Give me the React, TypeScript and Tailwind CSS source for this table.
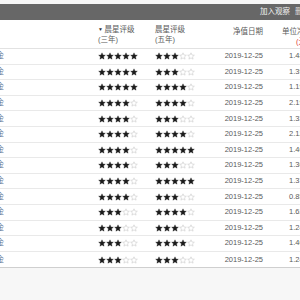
import React from "react";

type Fund = {
  name: string;
  r3: number;
  r5: number;
  date: string;
  nav: string;
};

const funds: Fund[] = [
  { name: "混合基金", r3: 5, r5: 3, date: "2019-12-25", nav: "1.485" },
  { name: "混合基金", r3: 5, r5: 3, date: "2019-12-25", nav: "1.391" },
  { name: "混合基金", r3: 5, r5: 4, date: "2019-12-25", nav: "1.195" },
  { name: "混合基金", r3: 4, r5: 4, date: "2019-12-25", nav: "2.195" },
  { name: "混合基金", r3: 4, r5: 3, date: "2019-12-25", nav: "1.332" },
  { name: "混合基金", r3: 4, r5: 4, date: "2019-12-25", nav: "2.124" },
  { name: "混合基金", r3: 4, r5: 5, date: "2019-12-25", nav: "1.403" },
  { name: "混合基金", r3: 4, r5: 3, date: "2019-12-25", nav: "1.360" },
  { name: "混合基金", r3: 4, r5: 5, date: "2019-12-25", nav: "1.371" },
  { name: "混合基金", r3: 4, r5: 3, date: "2019-12-25", nav: "0.856" },
  { name: "混合基金", r3: 3, r5: 4, date: "2019-12-25", nav: "1.623" },
  { name: "混合基金", r3: 3, r5: 3, date: "2019-12-25", nav: "1.241" },
  { name: "混合基金", r3: 3, r5: 4, date: "2019-12-25", nav: "1.406" },
  { name: "混合基金", r3: 3, r5: 3, date: "2019-12-25", nav: "1.243" },
];

function Star({ filled }: { filled: boolean }) {
  return (
    <svg width="8" height="8" viewBox="0 0 24 24" className="shrink-0">
      <path
        d="M12 2.5l2.9 6.6 7.1.6-5.4 4.7 1.6 7-6.2-3.7-6.2 3.7 1.6-7L2 9.7l7.1-.6z"
        fill={filled ? "#1c1c1c" : "none"}
        stroke={filled ? "#1c1c1c" : "#c4c4c4"}
        strokeWidth={filled ? 1 : 1.6}
        strokeLinejoin="round"
      />
    </svg>
  );
}

function Stars({ n }: { n: number }) {
  return (
    <div className="flex items-center">
      {[0, 1, 2, 3, 4].map((i) => (
        <Star key={i} filled={i < n} />
      ))}
    </div>
  );
}

const cols = "grid grid-cols-[98px_57px_60px_48px_40px]";

export default function App() {
  return (
    <div
      className="w-[300px] h-[300px] overflow-hidden bg-[#f7f7f7] pt-[4px] text-[7.5px] leading-[10px] text-[#5a5a5a]"
      style={{ fontFamily: '"Liberation Sans", "Noto Sans CJK SC", sans-serif' }}
    >
      <div className="h-[17px] bg-[#676767] flex items-center pl-[260px] text-[#f2f2f2] whitespace-nowrap border-b border-white overflow-hidden">
        <span>加入观察</span>
        <span className="ml-[5px] text-[#dddddd]">删除</span>
      </div>

      <div className="bg-white border-b border-[#cfcfcf]">
        <div className={`${cols} h-[28px] items-center border-b border-[#e2e2e2]`}>
          <div />
          <div className="whitespace-nowrap">
            <div>
              <span className="text-[5px] mr-[1.5px] text-[#333] align-[1px]">▼</span>
              晨星评级
            </div>
            <div>(三年)</div>
          </div>
          <div>
            <div>晨星评级</div>
            <div>(五年)</div>
          </div>
          <div className="self-start pt-[6px] text-right whitespace-nowrap">净值日期</div>
          <div className="self-start pt-[6px] pl-[19px] whitespace-nowrap">
            <div>单位净值</div>
            <div className="pl-[14px] text-[#d33]">(元)</div>
          </div>
        </div>

        {funds.map((f, i) => (
          <div
            key={i}
            className={`${cols} h-[15.6px] items-center ${i < funds.length - 1 ? "border-b border-[#e9e9e9]" : ""}`}
          >
            <div className="whitespace-nowrap text-[#56708f] -ml-[26px]">{f.name}</div>
            <Stars n={f.r3} />
            <Stars n={f.r5} />
            <div className="text-right">{f.date}</div>
            <div className="pl-[26px] whitespace-nowrap">{f.nav}</div>
          </div>
        ))}
      </div>
    </div>
  );
}
